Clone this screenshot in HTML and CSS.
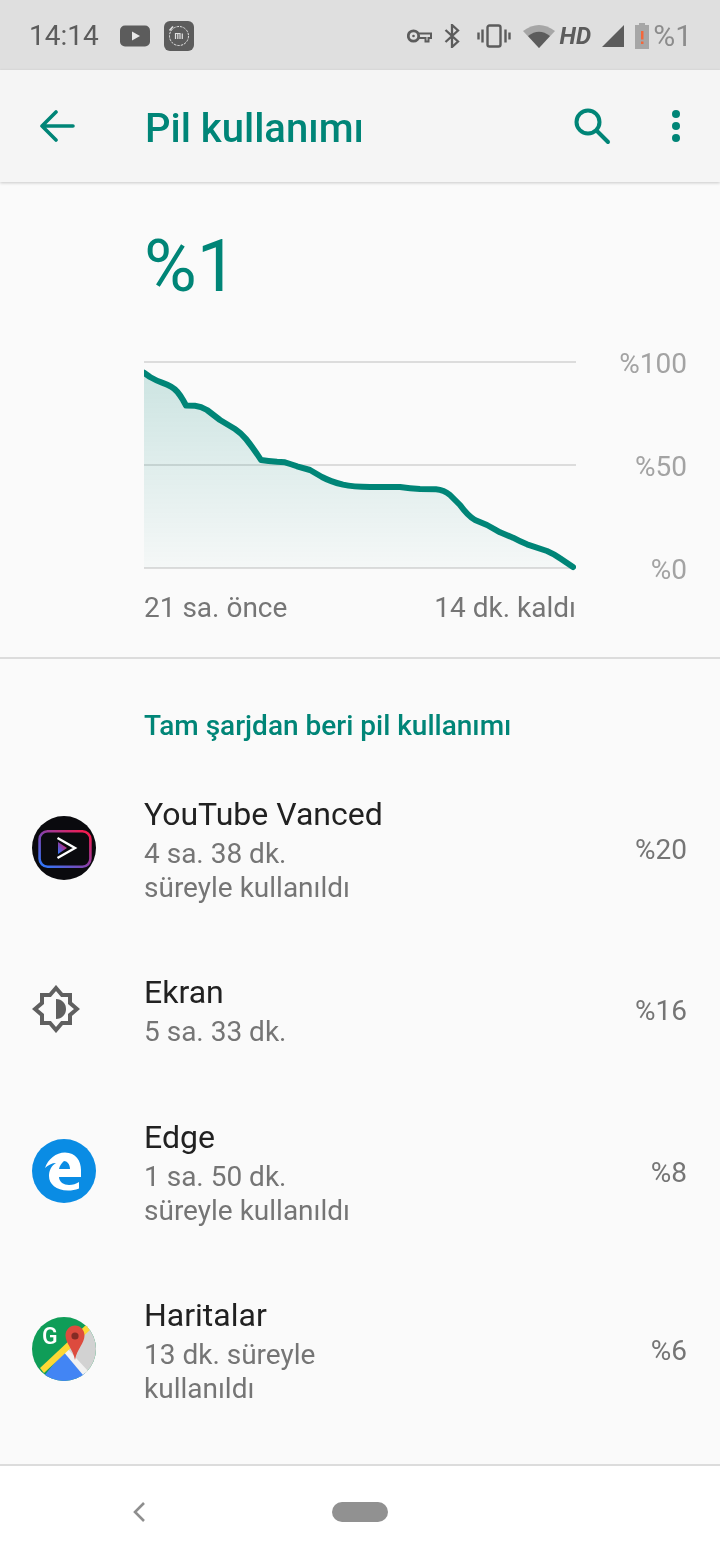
FILE: index.html
```html
<!DOCTYPE html>
<html>
  <head>
    <meta charset="utf-8">
    <link rel="stylesheet" href="styles.css">
  </head>
  <body>
    <div class="page">
      <div class="statusbar">
        <span class="clock">14:14</span>
        <svg class="ic-yt" width="30" height="22" viewBox="0 0 30 22"><rect width="30" height="21" y="0.5" rx="5" fill="#5c5c5c"/><path d="M12 6.500 L20 11 L12 15.500 Z" fill="#e8e8e8"/></svg>
        <svg class="ic-mi" width="30" height="30" viewBox="0 0 30 30"><rect width="30" height="30" rx="6" fill="#5c5c5c"/><circle cx="15" cy="15" r="9.500" fill="none" stroke="#e0e0e0" stroke-width="1" stroke-dasharray="2.500 1"/><path d="M5.500 9.500 L9 5.500" stroke="#e0e0e0" stroke-width="1.600"/><path d="M11.500 18 V12.500 H16 V18 M13.800 13 V18 M18.300 12.500 V18" fill="none" stroke="#e0e0e0" stroke-width="1.200"/></svg>
        <div class="status-right">
          <svg class="ic-key" width="25" height="16" viewBox="0 0 25 16"><circle cx="6.500" cy="8" r="5.200" fill="none" stroke="#5c5c5c" stroke-width="2.800"/><circle cx="6.500" cy="8" r="1.300" fill="#5c5c5c"/><path d="M11.500 5.500 H24 V10 H21.500 V13.500 H18.500 V10 H11.500" fill="none" stroke="#5c5c5c" stroke-width="2"/></svg>
          <svg class="ic-bt" width="16" height="24" viewBox="0 0 16 24"><path d="M1.500 6 L14 17.500 L8 23 V1 L14 6.500 L1.500 18" fill="none" stroke="#5c5c5c" stroke-width="2.300"/></svg>
          <svg class="ic-vib" width="34" height="24" viewBox="0 0 34 24"><rect x="10.500" y="1.500" width="13" height="21" rx="2" fill="none" stroke="#5c5c5c" stroke-width="2.400"/><path d="M5.500 5.500 V18.500 M1.500 8.500 V15.500 M28.500 5.500 V18.500 M32.500 8.500 V15.500" stroke="#5c5c5c" stroke-width="2.400"/></svg>
          <svg class="ic-wifi" width="32" height="24" viewBox="0 0 32 24"><path d="M0 7 Q16 -5 32 7 L16 24 Z" fill="#a6a6a6"/><path d="M5 12 Q16 3.500 27 12 L16 24 Z" fill="#5c5c5c"/></svg>
          <span class="hd">HD</span>
          <svg class="ic-signal" width="22" height="22" viewBox="0 0 22 22"><path d="M22 0 V22 H0 Z" fill="#5c5c5c"/></svg>
          <svg class="ic-batt" width="14" height="26" viewBox="0 0 14 26"><path d="M4 0 H10 V2 H14 V26 H0 V2 H4 Z" fill="#a6a6a6"/><path d="M6 8 H8.500 V16.500 H6 Z M6 18.500 H8.500 V21 H6 Z" fill="#f4673a"/></svg>
          <span class="batt-text">%1</span>
        </div>
      </div>

      <div class="appbar">
        <svg class="back" width="36" height="32" viewBox="0 0 36 32"><path d="M17 2 L3 16 L17 30 M3 16 H34" fill="none" stroke="#008577" stroke-width="3.600" stroke-linecap="round" stroke-linejoin="round"/></svg>
        <h1 class="title">Pil kullanımı</h1>
        <svg class="search" width="38" height="38" viewBox="0 0 38 38"><circle cx="14" cy="14" r="11.500" fill="none" stroke="#008577" stroke-width="4"/><path d="M23 23 L34 34" stroke="#008577" stroke-width="4" stroke-linecap="round"/></svg>
        <svg class="more" width="8" height="32" viewBox="0 0 8 32"><circle cx="4" cy="4" r="4" fill="#008577"/><circle cx="4" cy="16" r="4" fill="#008577"/><circle cx="4" cy="28" r="4" fill="#008577"/></svg>
      </div>

      <div class="hero">
        <div class="big">%1</div>
        <div class="chart">
          <svg width="432" height="240" viewBox="144 347 432 240">
            <defs>
              <linearGradient id="fade" x1="0" y1="0" x2="0" y2="1">
                <stop offset="0" stop-color="#008577" stop-opacity="0.18"/>
                <stop offset="1" stop-color="#008577" stop-opacity="0.02"/>
              </linearGradient>
            </defs>
            <path d="M144 362 H576 M144 465 H576 M144 568 H576" stroke="#dcdcdc" stroke-width="2" fill="none"/>
            <path d="M144 372.700 L150 377 Q157 381 162 382.700 Q167 384.500 171 386.700 Q175 389 177.500 392 Q180 395 183 400 L186 405.500 L195 405.800 Q201 406.500 207 410 L220 420 L235 429 Q241 433 246 439 Q254 449 261 460 Q268 461 277 461.800 L285 462.300 Q291 464 297 466.300 L310 470 L322 477 Q330 481.300 343 484.700 Q353 487 370 487 L400 487 Q410 488.500 420 489 L436 489.300 Q444 490 450 495 L460 505 Q468 516 475 520 L487 525 L500 532.300 L513 537.700 Q520 541.500 527 544.300 L547 551 Q554 554 560 558.300 L573 567 V568 H144 Z" fill="url(#fade)"/>
            <path d="M144 372.700 L150 377 Q157 381 162 382.700 Q167 384.500 171 386.700 Q175 389 177.500 392 Q180 395 183 400 L186 405.500 L195 405.800 Q201 406.500 207 410 L220 420 L235 429 Q241 433 246 439 Q254 449 261 460 Q268 461 277 461.800 L285 462.300 Q291 464 297 466.300 L310 470 L322 477 Q330 481.300 343 484.700 Q353 487 370 487 L400 487 Q410 488.500 420 489 L436 489.300 Q444 490 450 495 L460 505 Q468 516 475 520 L487 525 L500 532.300 L513 537.700 Q520 541.500 527 544.300 L547 551 Q554 554 560 558.300 L573 567" fill="none" stroke="#008577" stroke-width="6" stroke-linejoin="round" stroke-linecap="round"/>
          </svg>
          <div class="scale">
            <span>%100</span>
            <span>%50</span>
            <span>%0</span>
          </div>
        </div>
        <div class="times">
          <span>21 sa. önce</span>
          <span>14 dk. kaldı</span>
        </div>
      </div>

      <div class="list">
        <h2 class="section">Tam şarjdan beri pil kullanımı</h2>

        <div class="row row-3">
          <svg class="app-icon" width="64" height="64" viewBox="0 0 64 64">
            <defs>
              <linearGradient id="ytv" x1="0" y1="1" x2="1" y2="0">
                <stop offset="0" stop-color="#2a7bff"/>
                <stop offset="0.5" stop-color="#8a3fa8"/>
                <stop offset="1" stop-color="#ff1744"/>
              </linearGradient>
            </defs>
            <circle cx="32" cy="32" r="32" fill="#0a0a0e"/>
            <rect x="7.600" y="15.300" width="50.800" height="35.400" rx="8" fill="none" stroke="url(#ytv)" stroke-width="2.600"/>
            <path d="M26 26 V38 L35 32 Z" fill="url(#ytv)"/>
            <path d="M25.500 22 L43 32 L25.500 42" fill="none" stroke="#fff" stroke-width="2.400"/>
          </svg>
          <div class="row-text">
            <div class="name">YouTube Vanced</div>
            <div class="sub">4 sa. 38 dk.<br>süreyle kullanıldı</div>
          </div>
          <div class="pct">%20</div>
        </div>

        <div class="row row-2">
          <svg class="app-icon icon-screen" width="48" height="48" viewBox="0 0 48 48">
            <path d="M24 3 L30 10 H38 V18 L45 24 L38 30 V38 H30 L24 45 L18 38 H10 V30 L3 24 L10 18 V10 H18 Z" fill="none" stroke="#5f5f5f" stroke-width="4"/>
            <path d="M24 14 C30 14 34 18.500 34 24 C34 29.500 30 34 24 34 Z" fill="#5f5f5f"/>
          </svg>
          <div class="row-text">
            <div class="name">Ekran</div>
            <div class="sub">5 sa. 33 dk.</div>
          </div>
          <div class="pct">%16</div>
        </div>

        <div class="row row-3">
          <svg class="app-icon" width="64" height="64" viewBox="0 0 64 64">
            <circle cx="32" cy="32" r="32" fill="#0a8ce4"/>
            <path d="M13 29 C16 20 24 13.500 33 13.500 C44 13.500 49 22 49 31 V38 H27 C27 43 32 46 37 46 C41 46 44 45 47 43 V49.500 C43 51 40 51.500 36 51.500 C24 51.500 17 45 17 37 C17 32 19 27 24 24 C20 24 16 26 13 29 Z M27 30 H38 C38 25 35 22 32 22 C29.500 24 27.500 27 27 30 Z" fill="#fff" fill-rule="evenodd"/>
          </svg>
          <div class="row-text">
            <div class="name">Edge</div>
            <div class="sub">1 sa. 50 dk.<br>süreyle kullanıldı</div>
          </div>
          <div class="pct">%8</div>
        </div>

        <div class="row row-3">
          <svg class="app-icon" width="64" height="64" viewBox="0 0 64 64">
            <defs>
              <clipPath id="disc"><circle cx="32" cy="32" r="32"/></clipPath>
            </defs>
            <g clip-path="url(#disc)">
              <rect width="64" height="64" fill="#0f9d58"/>
              <path d="M64 0 V64 H48 L30 32 Z" fill="#d2d2d2"/>
              <path d="M8 64 L33 33 L60 64 Z" fill="#4285f4"/>
              <path d="M33 29 L56 54 L51 58 L30 33 Z" fill="#f1f1f1"/>
              <path d="M8 51 L55 7 L59 12 L12 56 Z" fill="#fdd835"/>
            </g>
            <path d="M43 8.500 C37.500 8.500 33.500 13 33.500 18.500 C33.500 26 41 32 43 43 C45 32 52.500 26 52.500 18.500 C52.500 13 48.500 8.500 43 8.500 Z" fill="#dd4b3e"/>
            <circle cx="43" cy="19" r="3.600" fill="#842b24"/>
            <text x="10" y="27" class="maps-g">G</text>
          </svg>
          <div class="row-text">
            <div class="name">Haritalar</div>
            <div class="sub">13 dk. süreyle<br>kullanıldı</div>
          </div>
          <div class="pct">%6</div>
        </div>
      </div>

      <div class="navbar">
        <svg class="nav-back" width="14" height="22" viewBox="0 0 14 22"><path d="M12 2 L3 11 L12 20" fill="none" stroke="#8e8e8e" stroke-width="2.600"/></svg>
        <div class="nav-home"></div>
      </div>
    </div>
  </body>
</html>
```

FILE: styles.css
```css
* {
  box-sizing: border-box;
}

body {
  margin: 0;
  font-family: Roboto, "Noto Sans", sans-serif;
  background-color: #fafafa;
}

.page {
  display: flex;
  flex-direction: column;
  width: 720px;
  height: 1560px;
  overflow: hidden;
  will-change: transform;
}

/* barra de status */
.statusbar {
  display: flex;
  align-items: center;
  height: 70px;
  padding: 1px 28px 0 29px;
  background-color: #dfdfdf;
  color: #5c5c5c;
}

.clock {
  font-size: 28px;
}

.ic-yt {
  margin-left: 21px;
}

.ic-mi {
  margin-left: 14px;
}

.status-right {
  display: flex;
  align-items: center;
  margin-left: auto;
}

.ic-bt {
  margin-left: 12px;
}

.ic-vib {
  margin-left: 17px;
}

.ic-wifi {
  margin-left: 12px;
}

.hd {
  margin-left: 5px;
  font-size: 24px;
  font-weight: 700;
  font-style: italic;
}

.ic-signal {
  margin-left: 11px;
}

.ic-batt {
  margin-left: 11px;
}

.batt-text {
  margin-left: 4px;
  font-size: 30px;
  color: #8c8c8c;
}

/* barra do app */
.appbar {
  display: flex;
  align-items: center;
  height: 112px;
  padding-left: 39px;
  background-color: #f5f5f5;
  box-shadow: 0 1px 3px rgba(0, 0, 0, 0.2);
  position: relative;
}

.title {
  margin: 4px 0 0 70px;
  font-size: 40px;
  font-weight: 500;
  color: #008577;
}

.search {
  margin: 2px 0 0 auto;
}

.more {
  margin: 0 40px 0 60px;
}

/* grafico */
.hero {
  padding: 35px 33px 32px 144px;
  border-bottom: 2px solid #dcdcdc;
}

.big {
  height: 100px;
  font-size: 72px;
  line-height: 100px;
  color: #008577;
}

.chart {
  display: flex;
  justify-content: space-between;
  margin-top: 30px;
}

.scale {
  display: flex;
  flex-direction: column;
  justify-content: space-between;
  align-items: flex-end;
  font-size: 28px;
  line-height: 34px;
  color: #a3a3a3;
}

.times {
  display: flex;
  justify-content: space-between;
  width: 432px;
  margin-top: 4px;
  font-size: 28px;
  line-height: 34px;
  color: #757575;
}

/* lista */
.list {
  flex: 1;
}

.section {
  margin: 0;
  padding: 50px 0 0 144px;
  height: 100px;
  font-size: 28px;
  line-height: 34px;
  font-weight: 500;
  color: #008577;
}

.row {
  display: flex;
  align-items: center;
  padding: 0 33px 0 32px;
}

.row-3 {
  height: 178px;
}

.row-2 {
  height: 145px;
}

.row-text {
  margin-left: 48px;
  flex: 1;
}

.icon-screen {
  margin: -2px 8px 0 0;
}

.icon-screen + .row-text {
  margin-left: 56px;
}

.name {
  font-size: 32px;
  line-height: 45px;
  color: #212121;
}

.sub {
  font-size: 28px;
  line-height: 34px;
  color: #757575;
}

.pct {
  margin-top: 2px;
  font-size: 28px;
  color: #757575;
}

.maps-g {
  font-family: Roboto, sans-serif;
  font-size: 23px;
  font-weight: 500;
  fill: #fff;
}

/* barra de navegacao */
.navbar {
  display: flex;
  align-items: center;
  height: 96px;
  padding: 0 0 2px 132px;
  background-color: #fff;
  border-top: 2px solid #dcdcdc;
}

.nav-home {
  width: 56px;
  height: 20px;
  margin-left: 186px;
  border-radius: 10px;
  background-color: #919191;
}
```
